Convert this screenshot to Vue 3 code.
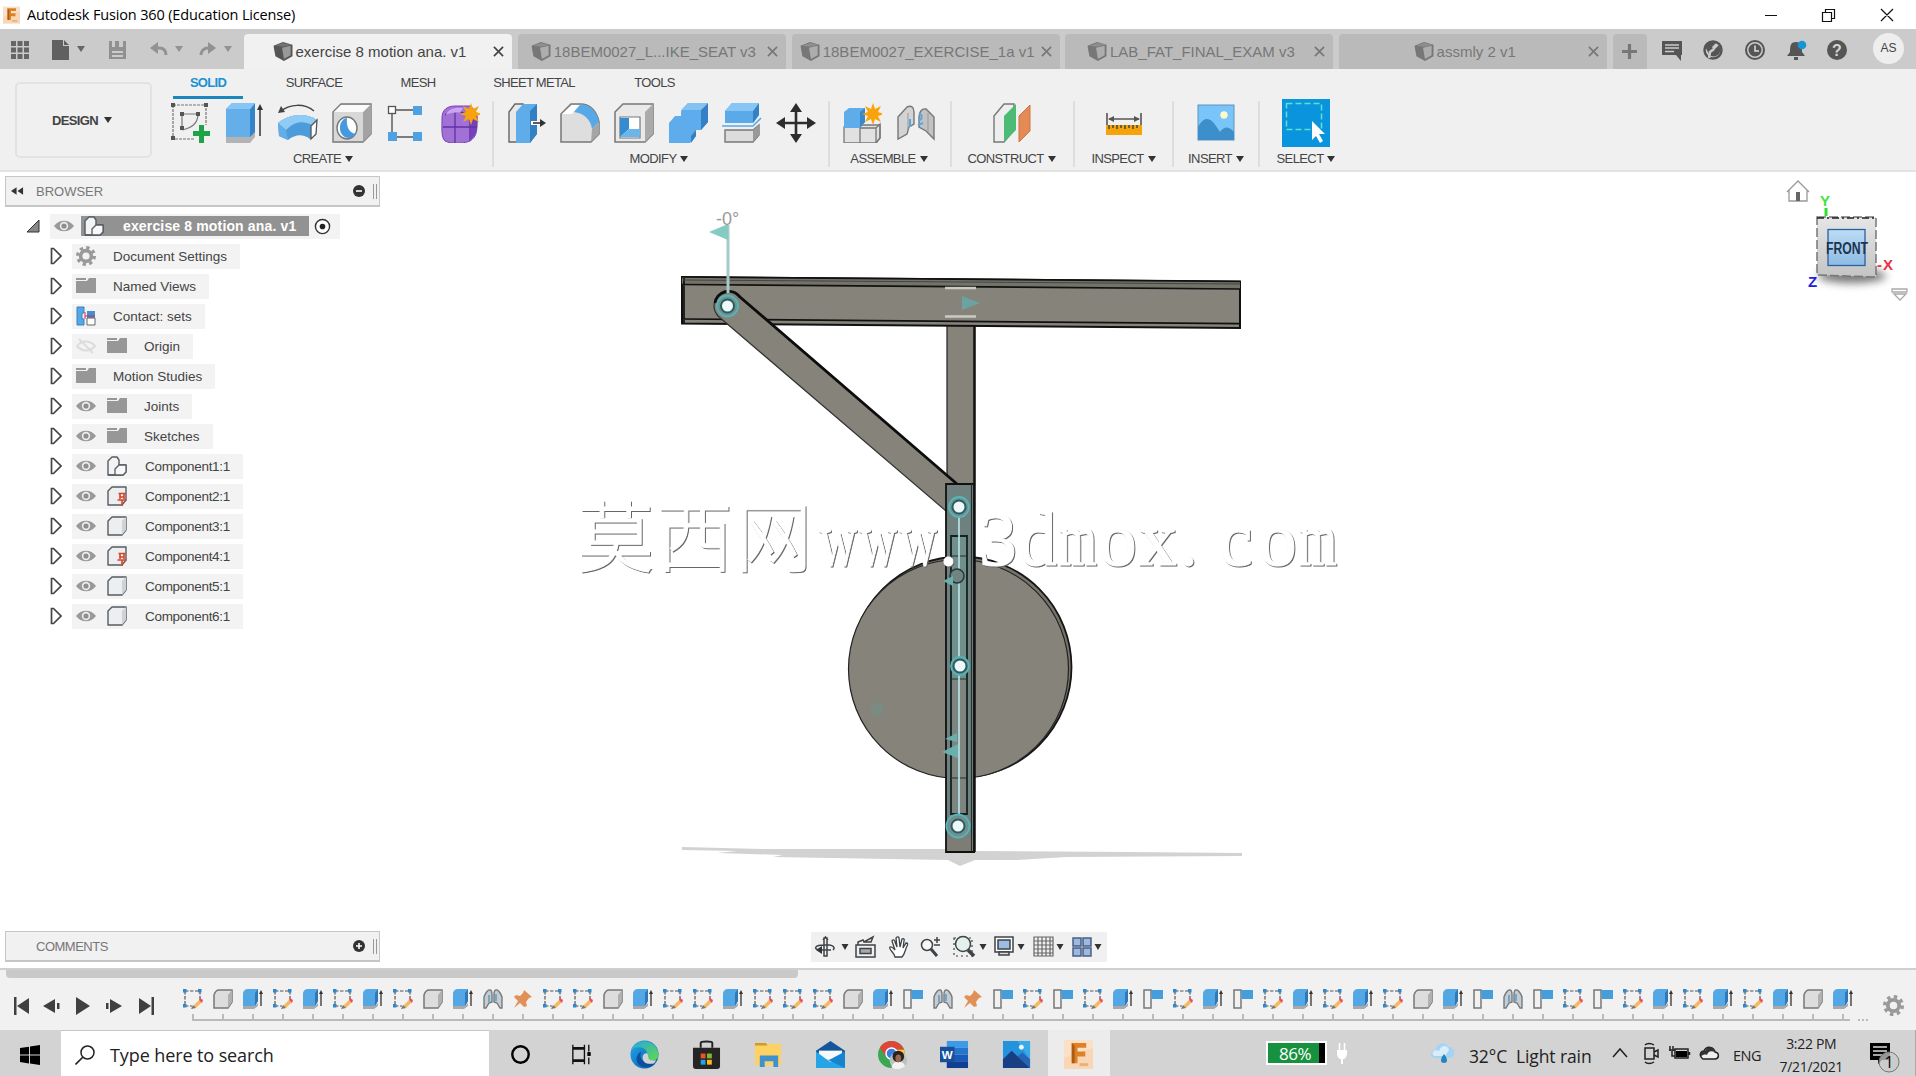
<template>
    <div class="window">
        <svg class="sprite" width="0" height="0">
            <linearGradient id="cubeFace" x1="0" y1="0" x2="0" y2="1">
                <stop offset="0" stop-color="#e6e6e6" />
                <stop offset="1" stop-color="#c4c4c4" />
            </linearGradient>
            <linearGradient id="frontFace" x1="0" y1="0" x2="0" y2="1">
                <stop offset="0" stop-color="#bcdcf4" />
                <stop offset="1" stop-color="#8dbbe4" />
            </linearGradient>
            <linearGradient id="edgeBlue" x1="0" y1="0" x2="1" y2="1">
                <stop offset="0" stop-color="#1fa9e6" />
                <stop offset="1" stop-color="#0b55b0" />
            </linearGradient>
            <linearGradient id="edgeGreen" x1="0" y1="0" x2="1" y2="1">
                <stop offset="0" stop-color="#25a8dd" />
                <stop offset="1" stop-color="#63d84c" />
            </linearGradient>

            <!-- ribbon -->
            <symbol id="r-sketch" viewBox="0 0 40 40">
                <path d="M3 2H36V22M3 2V36H24" fill="none" stroke="#777" stroke-width="1.2" stroke-dasharray="3 1" />
                <path d="M12 11V27M12 11H28C28 20 22 25 12 27" fill="none" stroke="#777" stroke-width="1.2" />
                <path d="M1 0h4v4H1zM34 0h4v4h-4zM1 33h4v4H1zM10 9h4v4h-4zM26 9h4v4h-4zM10 23h4v4h-4z" fill="#555" />
                <path d="M29 22h5v6h6v5h-6v7h-5v-7h-6v-5h6z" fill="#1ea446" />
            </symbol>
            <symbol id="r-extrude" viewBox="0 0 40 40">
                <path d="M2 34l6-6h23v6l-5 6H2z" fill="#b3b3b3" />
                <path d="M2 6l6-6h23l-5 6v28H2z" fill="#64afe9" />
                <path d="M26 6l5-6v29l-5 5z" fill="#3584c8" />
                <path d="M2 6l6-6h23l-5 6z" fill="#86c5f4" />
                <path d="M36 33V4" stroke="#333" stroke-width="1.5" />
                <path d="M33 7l3-6 3 6z" fill="#333" />
            </symbol>
            <symbol id="r-revolve" viewBox="0 0 40 40">
                <path d="M0 20C12 10 29 10 39 17l-1 15-6 4C25 31 18 31 10 37L1 33z" fill="#4c9cdc" />
                <path d="M0 20C12 10 29 10 39 17l-5 5C24 17 16 19 8 27z" fill="#8fcbf5" />
                <path d="M0 20l8 7 2 10-9-4z" fill="#63aee8" />
                <path d="M33 23l6-6-1 14-5 5z" fill="#fff" stroke="#555" stroke-width="1.3" />
                <path d="M3 8C12 1 26 0 36 8" fill="none" stroke="#444" stroke-width="1.5" />
                <path d="M0 10l3-7 4 6z" fill="#444" />
            </symbol>
            <symbol id="r-hole" viewBox="0 0 40 40">
                <path d="M1 9l8-8h30v30l-8 8H1z" fill="#d8d8d8" stroke="#777" stroke-width="1.4" />
                <path d="M31 9l8-8v30l-8 8z" fill="#a3a3a3" />
                <path d="M2 9l7-7h29l-7 7z" fill="#fafafa" />
                <ellipse cx="15" cy="25" rx="10" ry="11" fill="#fff" stroke="#777" stroke-width="1.4" />
                <path d="M15 15c-1 10 3 15 9 16-8 9-17 1-16-7 0-5 4-9 7-9z" fill="#4799df" />
            </symbol>
            <symbol id="r-pattern" viewBox="0 0 40 40">
                <path d="M10 7H27M6 11V29M11 34H27" fill="none" stroke="#555" stroke-width="1.4" />
                <rect x="2.5" y="3.5" width="7" height="7" fill="#fff" stroke="#555" stroke-width="1.3" />
                <path d="M27 3h9v9h-9zM2 29h9v9H2zM27 29h9v9h-9z" fill="#4ea1e2" />
            </symbol>
            <symbol id="r-form" viewBox="0 0 40 40">
                <path d="M2 15C2 7 7 3 15 3h15c6 4 8 9 7 18 0 8-1 13-7 17-8 3-19 3-25 0-4-4-3-12-3-23z" fill="#a171d6" stroke="#7943b7" />
                <path d="M29 14l8-4c1 12 1 22-8 28z" fill="#7640ba" />
                <path d="M5 12c7-5 17-4 23 0M3 24h34M15 9v31" fill="none" stroke="#6230a6" stroke-width="1.3" />
                <path d="M6 12c2-6 9-8 17-7l-3 5c-5-1-10 0-14 2z" fill="#c9a5f2" />
                <path d="M31 0l2 6 6-3-3 6 6 2-6 2 3 6-6-3-2 6-2-6-6 3 3-6-6-2 6-2-3-6 6 3z" fill="#f8a20c" />
            </symbol>
            <symbol id="r-press" viewBox="0 0 40 40">
                <path d="M3 9l6-8h8v30l-6 8H3z" fill="#e8e8e8" stroke="#666" stroke-width="1.4" />
                <path d="M10 9l7-8h14v30l-7 9H10z" fill="#5eace9" />
                <path d="M24 8l7-7v30l-7 9z" fill="#347fc2" />
                <path d="M25 20h9" stroke="#fff" stroke-width="4" />
                <path d="M27 20h10" stroke="#333" stroke-width="1.6" />
                <path d="M34 16l6 4-6 4z" fill="#333" />
            </symbol>
            <symbol id="r-fillet" viewBox="0 0 40 40">
                <path d="M1 11L11 1h9c11 0 17 8 19 18v12l-8 8H1z" fill="#dedede" stroke="#777" stroke-width="1.5" />
                <path d="M2 11l10-9h7l-7 9z" fill="#fff" />
                <path d="M14 9l7-8c10 1 16 8 18 18l-7 7C31 17 24 10 14 9z" fill="#56a8e7" />
                <path d="M32 26l7-7v12l-8 8z" fill="#a5a5a5" />
            </symbol>
            <symbol id="r-shell" viewBox="0 0 40 40">
                <path d="M1 9l8-8h30v30l-8 8H1z" fill="#e9e9e9" stroke="#777" stroke-width="1.5" />
                <path d="M31 9l8-8v30l-8 8z" fill="#aaa" />
                <path d="M6 14h20v21H6z" fill="#fff" stroke="#777" stroke-width="1.2" />
                <path d="M6 15h9v11l-9 8z" fill="#348bd0" />
                <path d="M6 34l9-8h11v8z" fill="#6cb5eb" />
            </symbol>
            <symbol id="r-combine" viewBox="0 0 40 40">
                <path d="M1 20l6-7h6V8l7-8h20v19l-7 8h-5v6l-6 7H1z" fill="#5eaceb" />
                <path d="M33 7l7-7v19l-7 8zM23 33l5-6v6l-5 7z" fill="#357fc4" />
                <path d="M13 7l7-7h20l-7 7z" fill="#83c2f1" />
            </symbol>
            <symbol id="r-split" viewBox="0 0 40 40">
                <path d="M3 8l7-8h27v12l-6 8H3z" fill="#5aa9e8" />
                <path d="M31 8l6-8v12l-6 8z" fill="#3480c4" />
                <path d="M3 8l7-8h27l-6 8z" fill="#86c5f4" />
                <path d="M3 27h28l6-5v10l-6 7H3z" fill="#dcdcdc" stroke="#777" stroke-width="1.4" />
                <path d="M31 27l6-5v10l-6 7z" fill="#999" />
                <path d="M0 23h31l8-8" fill="none" stroke="#5aa9e8" stroke-width="1.7" />
            </symbol>
            <symbol id="r-move" viewBox="0 0 40 40">
                <path d="M20 5v30M5 20h30" stroke="#2d2d2d" stroke-width="2.6" />
                <path d="M20 0l6 9H14zM20 40l-6-9h12zM0 20l9-6v12zM40 20l-9 6V14z" fill="#2d2d2d" />
            </symbol>
            <symbol id="r-newcomp" viewBox="0 0 40 40">
                <path d="M2 24h16V22h20v13l-4 5H2z" fill="#e1e1e1" stroke="#777" stroke-width="1.3" />
                <path d="M2 9l5-4h16v14l-5 6H2z" fill="#5eadea" />
                <path d="M18 9l5-4v14l-5 6z" fill="#3a88cb" />
                <path d="M18 25v15M18 25h16v15M34 25l4-4v14l-4 5" fill="none" stroke="#777" stroke-width="1.3" />
                <path d="M31 0l2 6 6-3-3 6 6 2-6 2 3 6-6-3-2 6-2-6-6 3 3-6-6-2 6-2-3-6 6 3z" fill="#f8a20c" />
            </symbol>
            <symbol id="r-joint" viewBox="0 0 40 40">
                <path d="M2 14l9-10c4-2 7 0 7 5v12l-5 3-2 7-9 5z" fill="#d3d3d3" stroke="#777" stroke-width="1.4" />
                <path d="M38 14l-8-8c-4-1-7 3-7 8v10l7 4 8 8z" fill="#c2c2c2" stroke="#777" stroke-width="1.4" />
                <path d="M12 10v17M32 10v19" stroke="#999" />
                <path d="M14 16v8M23 11c4 0 3 6 0 6M22 22l5-2" fill="none" stroke="#55a8e4" stroke-width="2" />
            </symbol>
            <symbol id="r-plane" viewBox="0 0 40 40">
                <path d="M2 13L12 1h10v26L12 39H2z" fill="#eee" stroke="#777" stroke-width="1.4" />
                <path d="M12 13L24 1v26L12 39z" fill="#4dbb75" />
                <path d="M27 13L38 2v26L27 39z" fill="#e58a55" stroke="#c77643" />
            </symbol>
            <symbol id="r-measure" viewBox="0 0 40 40">
                <path d="M3 10v12M37 10v12M5 16h30" stroke="#555" stroke-width="1.6" />
                <path d="M4 16l6-3v6zM36 16l-6-3v6z" fill="#555" />
                <rect x="2" y="22" width="36" height="10" fill="#f4a30a" />
                <path d="M5 22v4M9 22v3M13 22v4M17 22v3M21 22v4M25 22v3M29 22v4M33 22v3" stroke="#3f3f3f" stroke-width="1.4" />
            </symbol>
            <symbol id="r-insert" viewBox="0 0 40 40">
                <rect x="2" y="2" width="36" height="35" fill="#79c5fa" stroke="#5b94bd" />
                <circle cx="28" cy="12" r="3.7" fill="#fffbc8" />
                <path d="M2 24C8 13 14 14 20 23l4 6c4-6 9-6 14 0v8H2z" fill="#3c8fca" />
            </symbol>
            <symbol id="r-select" viewBox="0 0 48 48">
                <rect width="48" height="48" fill="#0a94dd" />
                <rect x="4.5" y="4.5" width="35" height="26" fill="none" stroke="#5de0d0" stroke-width="1.5" stroke-dasharray="6 3" />
                <path d="M30 22l13 13h-6l4 7-3 2-4-7-4 4z" fill="#fff" />
            </symbol>

            <!-- small feature icons -->
            <symbol id="t-sketch" viewBox="0 0 20 20">
                <path d="M2 2h15v9M2 2v15h7" fill="none" stroke="#555" stroke-width="1.2" stroke-dasharray="3.5 1.5" />
                <path d="M0 0h3.5v3.5H0zM15 0h3.5v3.5H15zM0 15h3.5v3.5H0z" fill="#3088cc" />
                <path d="M10 17l6-6 3 2-6 6z" fill="#f5b95c" />
                <path d="M16 11l1-2 3 2-1 3z" fill="#ef4d63" />
                <path d="M8 20l2-4 3 3z" fill="#777" />
            </symbol>
            <symbol id="t-box" viewBox="0 0 20 20">
                <path d="M1 6c1-3 2-5 5-5h13v12l-4 6H1z" fill="#ddd" stroke="#777" stroke-width="1.5" />
                <path d="M15 6l4-5v12l-4 6z" fill="#b0b0b0" />
            </symbol>
            <symbol id="t-extrude" viewBox="0 0 20 20">
                <path d="M0 17h12l3-3v3l-4 3H0z" fill="#aaa" />
                <path d="M0 4c1-3 2-4 5-4h10v12l-3 5H0z" fill="#54a7e5" />
                <path d="M12 4l3-4v12l-3 5z" fill="#3178b7" />
                <path d="M18 17V3" stroke="#333" stroke-width="1.3" />
                <path d="M16 5l2-4 2 4z" fill="#333" />
            </symbol>
            <symbol id="t-joint" viewBox="0 0 20 20">
                <path d="M1 8c1-3 4-8 6-7 2 0 2 3 2 5v7l-3 1-3 5H1zM19 8c-1-3-4-8-6-7-2 0-2 3-2 5v7l3 1 3 5h2z" fill="#c8ccd0" stroke="#747a7f" stroke-width="1.4" />
                <path d="M6 6v7M13 5v7" stroke="#4f9ecb" stroke-width="1.5" />
            </symbol>
            <symbol id="t-pin" viewBox="0 0 20 20">
                <path d="M11 1l8 7-3 1-3 4 1 4-3 1-4-4-6 5 4-7-4-4 2-2 4 1 3-3z" fill="#e19157" />
            </symbol>
            <symbol id="t-flag" viewBox="0 0 20 20">
                <path d="M1 1h7v18H1z" fill="#f1f1f1" stroke="#777" stroke-width="1.5" />
                <path d="M8 1h12v9H9z" fill="#459ddc" />
            </symbol>

            <!-- browser tree -->
            <symbol id="b-eye" viewBox="0 0 20 20">
                <path d="M0 10C5 3 15 3 20 10 15 17 5 17 0 10z" fill="#999" />
                <circle cx="10" cy="10" r="4.2" fill="#eee" />
                <circle cx="10" cy="10" r="2.6" fill="#8e8e8e" />
            </symbol>
            <symbol id="b-eyeoff" viewBox="0 0 20 20">
                <path d="M1 10C6 4 14 4 19 10 14 16 6 16 1 10zM3 3l14 14" fill="none" stroke="#dcdcdc" stroke-width="2" />
            </symbol>
            <symbol id="b-gear" viewBox="0 0 20 20">
                <circle cx="10" cy="10" r="5.4" fill="none" stroke="#999" stroke-width="3.6" />
                <circle cx="10" cy="10" r="8.4" fill="none" stroke="#999" stroke-width="3.2" stroke-dasharray="3.3 3.3" />
            </symbol>
            <symbol id="b-folder" viewBox="0 0 20 20">
                <path d="M0 5h11l2-3h7v15H0zM0 2h10v2H0z" fill="#979797" />
            </symbol>
            <symbol id="b-contact" viewBox="0 0 20 20">
                <path d="M1 1h7v6H6v6h2v6H1z" fill="#55a7e5" stroke="#3b83bb" />
                <path d="M11 5h8v7h-8z" fill="#448fce" />
                <path d="M11 12h8v7h-8z" fill="#fff" stroke="#666" />
                <path d="M9 6v7M9 10h10" stroke="#d22c54" />
            </symbol>
            <symbol id="b-asm" viewBox="0 0 20 20">
                <path d="M1 5l4-4h5l2 3v5h7v7l-3 3H1z" fill="#f2f3f4" stroke="#555c63" stroke-width="1.4" stroke-linejoin="round" />
                <path d="M8 19v-6l4-4h7v7l-3 3zM1 19h7" fill="#f8f8f8" stroke="#555c63" stroke-width="1.3" stroke-linejoin="round" />
            </symbol>
            <symbol id="b-comp" viewBox="0 0 20 20">
                <path d="M1 5l4-4h14v13l-4 5H1z" fill="#eceef0" stroke="#555c63" stroke-width="1.4" stroke-linejoin="round" />
                <path d="M15 5l4-4v13l-4 5z" fill="#cfd2d5" />
            </symbol>
            <symbol id="b-pinned" viewBox="0 0 20 20">
                <path d="M1 5l4-4h14v13l-4 5H1z" fill="#eceef0" stroke="#555c63" stroke-width="1.4" stroke-linejoin="round" />
                <path d="M11.500 7.500h7M13 8v5M17 8v5M13 11h4M10.500 14h9M15 14v6" stroke="#d54424" stroke-width="1.6" />
            </symbol>

            <symbol id="cube" viewBox="0 0 20 20">
                <path d="M0 4L10 0l10 3v12l-9 5L2 15z" fill="currentColor" />
                <path d="M9 6l9-2v10l-7 4z" fill="#fff" opacity=".4" />
                <path d="M2 4l8-3 9 2-9 2z" fill="#fff" opacity=".18" />
            </symbol>
            <symbol id="fusion" viewBox="0 0 30 30">
                <rect width="30" height="30" fill="#fbe0c8" />
                <path d="M0 18l30-10v22H0z" fill="#f9cfa9" opacity=".6" />
                <path d="M8 3h15v5h-9v4h8v5h-8v7H8z" fill="#dd8129" />
                <path d="M8 3l3 3v18H8z" fill="#ad5a12" />
                <path d="M16 24h9v3h-9z" fill="#e9b078" />
            </symbol>
        </svg>

        <header class="titlebar">
            <svg class="app-logo"><use href="#fusion" /></svg>
            <span class="app-title">Autodesk Fusion 360 (Education License)</span>
            <svg class="win-buttons" viewBox="0 0 140 20">
                <path d="M6 10.5h12M63.5 7.5h9v9h-9zM66.5 7V4.5h9v9H73M122 4l12 12M134 4l-12 12" fill="none" stroke="#111" stroke-width="1.2" />
            </svg>
        </header>

        <div class="tabstrip">
            <svg class="quick" viewBox="0 0 244 39">
                <path d="M11 11h5v5h-5zM17.5 11h5v5h-5zM24 11h5v5h-5zM11 17.5h5v5h-5zM17.5 17.5h5v5h-5zM24 17.5h5v5h-5zM11 24h5v5h-5zM17.5 24h5v5h-5zM24 24h5v5h-5z" fill="#666" />
                <path d="M52 10h11v6h6v14H52zM64 10l5 5h-5z" fill="#606060" />
                <path d="M77 16h8l-4 6z" fill="#666" />
                <path d="M109 11h17v18h-17z" fill="#909090" />
                <path d="M112 11h3v6h-3zM119 11h4v6h-4zM112 21h11v2h-11zM112 25h11v2h-11z" fill="#cbcbcb" />
                <path d="M153 18h6c5 0 7 3 7 7" fill="none" stroke="#929292" stroke-width="3" />
                <path d="M150 18l8-6v12z" fill="#929292" />
                <path d="M175 16h8l-4 6zM224 16h8l-4 6z" fill="#929292" />
                <path d="M212 18h-4c-5 0-7 4-7 7" fill="none" stroke="#929292" stroke-width="3" />
                <path d="M216 18l-8-6v12z" fill="#929292" />
            </svg>
            <div v-for="tab in tabs" :key="tab.name" class="doc-tab" :class="{ active: tab.active }">
                <div class="doc-name">
                    <svg class="cube"><use href="#cube" /></svg>
                    <span>{{ tab.name }}</span>
                </div>
                <svg class="close" viewBox="0 0 12 12"><path d="M1 1l10 10M11 1L1 11" stroke="currentColor" stroke-width="1.8" /></svg>
            </div>
            <div class="new-tab">
                <svg viewBox="0 0 16 16"><path d="M8 1v14M1 8h14" stroke="#777" stroke-width="3" /></svg>
            </div>
            <svg class="status" viewBox="0 0 200 39">
                <path d="M6 11h20v14h-1v6l-5-6H6z" fill="#555" />
                <path d="M9 15h14M9 18h14M9 21.5h9" stroke="#ccc" stroke-width="1.4" />
                <circle cx="57" cy="20" r="8.5" fill="#cbcbcb" stroke="#555" stroke-width="2.5" />
                <path d="M49 17c1-5 7-7 12-5l-5 5 2 3 5-5c4 8-2 13-8 11-2 0-3-5-6-9z" fill="#555" />
                <path d="M53 28l1-6 4-3" fill="none" stroke="#cbcbcb" stroke-width="2.5" />
                <circle cx="99" cy="20" r="9" fill="#cbcbcb" stroke="#555" stroke-width="2" />
                <circle cx="99" cy="20" r="6.5" fill="#555" />
                <path d="M99 15.5V21h4" fill="none" stroke="#ddd" stroke-width="1.5" />
                <path d="M131 26l3-4c0-7 1-10 6-10s6 3 6 10l3 4zM138 27h4v3h-4z" fill="#555" />
                <circle cx="146" cy="15" r="4.3" fill="#1695d4" />
                <circle cx="181" cy="20" r="10" fill="#555" />
                <text x="181" y="26" text-anchor="middle" class="help">?</text>
            </svg>
            <div class="avatar">AS</div>
        </div>

        <div class="ribbon">
            <div class="workspace"><span>DESIGN</span><i class="caret"></i></div>
            <div class="ribbon-main">
                <nav class="ribbon-tabs">
                    <span v-for="(t, i) in ribbonTabs" :key="t.name" :class="{ current: i === 0 }"
                        :style="{ width: t.width + 'px' }"><b>{{ t.name }}</b></span>
                </nav>
                <div class="groups">
                    <section v-for="g in groups" :key="g.name" class="group" :class="g.name.toLowerCase()"
                        :style="{ width: g.width + 'px' }">
                        <div class="tools">
                            <svg v-for="icon in g.icons" :key="icon" :class="['tool', icon]"><use :href="'#r-' + icon" /></svg>
                        </div>
                        <div class="group-name"><span>{{ g.name }}</span><i class="caret"></i></div>
                    </section>
                </div>
            </div>
        </div>

        <main class="canvas">
            <svg class="scene" viewBox="0 172 1916 797">
                <!-- ground shadow -->
                <path d="M682 847l85 2h180l30 2 150 1 115 1 0 3-175 1-50 3h-42l-15 6-12-6-175-3 10-2-66-2 20-2-55-1z" fill="#d2d2d2" />
                <!-- wheel -->
                <circle cx="961" cy="667" r="110.5" fill="#77756b" stroke="#151515" stroke-width="1.8" />
                <ellipse cx="958.5" cy="669" rx="110" ry="109.5" fill="#86837a" stroke="#222" stroke-width="1.2" />
                <!-- beam and post -->
                <path d="M947 320h27.5v165H947z" fill="#86837a" stroke="#222" stroke-width="1.2" />
                <path d="M974.5 326v526" stroke="#111" stroke-width="2.5" />
                <path d="M682 277l558 4.5V328l-558-4.5z" fill="#86837a" stroke="#111" stroke-width="2" />
                <path d="M682 277l558 4.5v7.5l-558-5z" fill="#74736a" />
                <path d="M682 277l558 4.5M682 284.5l558 4.5M682 319l558 4.7M684 277v46" stroke="#111" stroke-width="1.7" />
                <path d="M683 280l557 4" stroke="#444" stroke-width="1" />
                <path d="M945 288h31M945 316.5h31" stroke="#cacac4" stroke-width="2.5" />
                <path d="M962 296l18 7-18 7z" fill="#6aa39f" />
                <!-- arm -->
                <path d="M718 316C711 308 714 297 722 292c6-3 12-1 18 5l217 187-11 27z" fill="#86837a" stroke="#333" stroke-width="1.2" />
                <path d="M715 303c1-10 16-17 25-6l217 187" fill="none" stroke="#0d0d0d" stroke-width="2.8" />
                <!-- slotted bar -->
                <path d="M946 484h28v368h-28z" fill="#6f817e" stroke="#111" stroke-width="1.8" />
                <path d="M947 837h26v14h-26z" fill="#7d7d76" />
                <path d="M946 852h29" stroke="#111" stroke-width="1.5" />
                <path d="M951 536h16v278h-16z" fill="#71908c" stroke="#14211f" stroke-width="1.8" />
                <path d="M952 680h14v133h-14z" fill="#7e8580" />
                <path d="M971.5 484v367M951 556h16M951 679h16M951 778h16" stroke="#223230" stroke-width="1.1" fill="none" />
                <path d="M959 515v300" stroke="#b5dcde" stroke-width="1.8" />
                <circle cx="957" cy="576" r="7" fill="#708480" stroke="#263936" stroke-width="1.5" />
                <path d="M943 581l10-5v10zM942 752l16-8v14zM945 739l12-6v9z" fill="#6aafab" />
                <circle cx="877" cy="709" r="7" fill="#748f86" opacity=".7" />
                <g v-for="j in joints" :key="j.y">
                    <circle :cx="j.x" :cy="j.y" :r="j.r" fill="#6f908f" stroke="#57b4b8" stroke-width="1.8" />
                    <circle :cx="j.x" :cy="j.y" r="6.5" fill="#eef8f8" stroke="#2b5c60" stroke-width="2" />
                </g>
                <!-- limit flag -->
                <path d="M728 225v68" stroke="#a4cbc4" stroke-width="3" />
                <path d="M709 232l19-8v16z" fill="#85cbc2" />
                <text x="716" y="225" class="angle">-0°</text>

                <g class="watermark">
                    <text x="577" y="566" class="han" textLength="235">莫西网</text>
                    <text v-for="c in url" :key="c.x" :transform="`translate(${c.x} 565) scale(${c.scale} 1)`">{{ c.ch }}</text>
                </g>

                <!-- view cube -->
                <ellipse cx="1852" cy="276" rx="34" ry="7" class="cube-shadow" />
                <path d="M1817 217h59v60l-59-2z" fill="url(#cubeFace)" stroke="#777" stroke-width="1.5" stroke-dasharray="9 3" />
                <path d="M1817 218h59" stroke="#222" stroke-width="1.5" stroke-dasharray="7 3 2 3" />
                <rect x="1828" y="229.5" width="37" height="36" fill="url(#frontFace)" stroke="#2b5f9f" stroke-width="1.3" />
                <text x="1826" y="253.5" class="front" textLength="42" lengthAdjust="spacingAndGlyphs">FRONT</text>
                <path d="M1826 208v8" stroke="#2ee02e" stroke-width="3" />
                <text x="1820" y="206" class="axis y-axis">Y</text>
                <text x="1808" y="287" class="axis z-axis">Z</text>
                <text x="1877" y="270" class="axis x-axis" textLength="16">-X</text>
                <path d="M1787 192l11-11 11 11M1789 190v11h18v-11" fill="#fff" stroke="#999" stroke-width="1.3" />
                <path d="M1796 192h4v9h-4z" fill="#666" />
                <path d="M1892 289h15v3h-15zM1894 294l6 6 6-6z" fill="#fff" stroke="#aaa" stroke-width="1.3" />
            </svg>

            <aside class="browser">
                <div class="panel-bar">
                    <svg class="rewind" viewBox="0 0 14 8"><path d="M0 4l6-4v8zM7 4l6-4v8z" fill="#333" /></svg>
                    <span>BROWSER</span>
                    <svg class="bullet" viewBox="0 0 12 12"><circle cx="6" cy="6" r="6" fill="#333" /><path d="M3 6h6" stroke="#fff" stroke-width="1.6" /></svg>
                    <i class="grip"></i>
                </div>
                <div class="root">
                    <svg class="opened" viewBox="0 0 14 14"><path d="M1 13L13 1v12z" fill="#888" stroke="#333" /></svg>
                    <div class="root-row">
                        <svg class="ic"><use href="#b-eye" /></svg>
                        <div class="root-name"><svg class="ic"><use href="#b-asm" /></svg><b>exercise 8 motion ana. v1</b></div>
                        <svg class="radio" viewBox="0 0 18 18"><circle cx="9" cy="9" r="7.5" fill="#fff" stroke="#333" stroke-width="1.5" /><circle cx="9" cy="9" r="3" fill="#222" /></svg>
                    </div>
                </div>
                <div v-for="n in nodes" :key="n.name" class="node">
                    <svg class="arrow" viewBox="0 0 12 18"><path d="M1.5 1.5h2L11 9l-7.5 7.5h-2z" fill="#fff" stroke="#444" stroke-width="1.7" /></svg>
                    <div class="node-row">
                        <svg v-if="n.eye" class="ic"><use :href="'#b-' + n.eye" /></svg>
                        <svg class="ic"><use :href="'#b-' + n.icon" /></svg>
                        <span :class="{ part: n.name.includes('Component') }">{{ n.name }}</span>
                    </div>
                </div>
            </aside>

            <div class="canvas-foot">
                <div class="panel-bar comments">
                    <span>COMMENTS</span>
                    <svg class="bullet" viewBox="0 0 12 12"><circle cx="6" cy="6" r="6" fill="#333" /><path d="M3 6h6M6 3v6" stroke="#fff" stroke-width="1.6" /></svg>
                    <i class="grip"></i>
                </div>
                <svg class="navbar" viewBox="0 0 296 30">
                    <g fill="none" stroke="#3e4347" stroke-width="1.5">
                        <path d="M13 6h3v18h-3zM12 8l2.5-3L17 8M22 18c4-4-4-6-9-5-9 0-11 4-5 5h12" />
                        <path d="M45 13h19v12H45zM47 13v-3l5-2 1 2 9-5-2 5h-7" />
                        <path d="M49 16.5h11v5H49z" fill="#aaa" />
                        <path d="M84 25c-1-5-7-8-5-10 2-1 4 2 5 3l-3-9c1-2 3-1 3 1l2 5-1-9c1-2 3-1 3 0l1 9 2-8c1-1 3 0 2 2l-1 7 3-5c2 0 2 1 1 3-2 4-2 8-5 11z" fill="#fff" stroke-width="1.3" />
                        <circle cx="116" cy="13" r="5.5" fill="#f5f8f6" /><path d="M126 5v6M123 8h6M123 13h6" />
                        <path d="M120 17l6 7" stroke-width="3" />
                        <path d="M143 6h18v18h-18z" stroke-dasharray="2 3" stroke-width="1.2" />
                        <circle cx="152" cy="12" r="7.5" fill="#e3f0eb" /><path d="M157 18l6 6" stroke-width="3.5" />
                        <path d="M184 5h18v15h-18z" fill="#fff" /><path d="M187 8h12v9h-12z" fill="#9dbce3" /><path d="M188 23h10v-3h-10z" fill="#ddd" />
                        <path d="M223 5h19v19h-19zM227 5v19M231 5v19M235 5v19M239 5v19M223 9h19M223 13h19M223 17h19M223 21h19" stroke="#666" stroke-width="1.2" />
                        <path d="M262 6h8v8h-8zM272 6h8v8h-8zM262 16h8v8h-8zM272 16h8v8h-8z" fill="#9cb9e2" stroke="#4a5e83" />
                    </g>
                    <path d="M5 18l6-4v8zM30.5 12h7l-3.5 6zM168.5 12h7l-3.5 6zM206.5 12h7l-3.5 6zM245.5 12h7l-3.5 6zM283.5 12h7l-3.5 6z" fill="#333" />
                </svg>
            </div>
        </main>

        <div class="timeline">
            <div class="scroll"></div>
            <div class="track">
                <svg class="playback" viewBox="0 0 166 24">
                    <path d="M14 3h2.5v18H14zM29 4v16l-12-8zM55 5v14l-12-7zM57 9h2.5v6H57zM76 3l14 9-14 9zM106 9h2.5v6H106zM110 5l12 7-12 7zM139 4v16l12-8zM151.5 3h2.5v18h-2.5z" fill="#404040" />
                </svg>
                <div class="features">
                    <div v-for="(f, i) in features" :key="i" class="feature">
                        <svg><use :href="'#t-' + kinds[f]" /></svg>
                        <i></i>
                    </div>
                </div>
                <div class="more"></div>
                <svg class="cog"><use href="#b-gear" /></svg>
            </div>
        </div>

        <footer class="taskbar">
            <div class="start"><svg viewBox="0 0 20 20"><path d="M0 3l9-1.3v7.8H0zM10 1.5L20 0v9.5H10zM0 10.5h9v8L0 17zM10 10.5h10V20l-10-1.5z" fill="#000" /></svg></div>
            <div class="search">
                <svg viewBox="0 0 20 20"><circle cx="12.5" cy="7.5" r="6.5" fill="none" stroke="#222" stroke-width="1.5" /><path d="M8 12l-7.5 7.5" stroke="#222" stroke-width="1.6" /></svg>
                <span>Type here to search</span>
            </div>
            <div class="task"><svg viewBox="0 0 30 30"><circle cx="15" cy="15" r="8.5" fill="none" stroke="#000" stroke-width="2.5" /></svg></div>
            <div class="task"><svg viewBox="0 0 30 30"><path d="M5 9.5h12v11H5zM5 5v3h12V5M5 25v-3h12v3M21.5 5v7M21.5 18v7" fill="none" stroke="#111" stroke-width="1.4" /><path d="M20 12.5h3.5v4H20z" /></svg></div>
            <div class="task"><svg viewBox="0 0 30 30">
                <circle cx="15" cy="15" r="14.5" fill="url(#edgeBlue)" />
                <path d="M1 11C5-2 25-2 29 12c2 8-4 11-10 9-5-1 0-4-1-7C16 6 5 6 1 11z" fill="url(#edgeGreen)" />
                <path d="M12 12c-4 7 2 14 14 12-5 6-16 6-19-2-1-5 2-9 5-10z" fill="#0c4f9f" />
                <path d="M18 14c2 5-1 8 9 7l-2 3c-7 2-12-1-12-6 0-3 3-5 5-4z" fill="#d3d3d3" />
            </svg></div>
            <div class="task"><svg viewBox="0 0 30 30">
                <path d="M9 8V3c0-2 12-2 12 0v5" fill="none" stroke="#222" stroke-width="2" /><path d="M1 8h28v19c0 2-1 3-3 3H4c-2 0-3-1-3-3z" fill="#252525" />
                <path d="M9 14h5v5H9z" fill="#ef5027" /><path d="M15.5 14h5v5h-5z" fill="#82bb29" /><path d="M9 20.5h5v5H9z" fill="#22a5e8" /><path d="M15.5 20.5h5v5h-5z" fill="#fabc16" />
            </svg></div>
            <div class="task"><svg viewBox="0 0 30 30"><path d="M1 3h11l3 3H1z" fill="#d79c17" /><path d="M1 6h12l2-2h13v22H1z" fill="#fdd164" /><path d="M6 28V16h19v12h-5v-6h-9v6z" fill="#3d91cf" /></svg></div>
            <div class="task"><svg viewBox="0 0 30 30"><path d="M0 11L15 1l15 10v6H0z" fill="#15559b" /><path d="M3 11h24v9H3z" fill="#f5fafd" /><path d="M0 12l15 11 15-11v17H0z" fill="#26a5e6" /><path d="M13 21L30 12v17z" fill="#1684cd" /></svg></div>
            <div class="task"><svg viewBox="0 0 30 30">
                <circle cx="14" cy="15" r="14" fill="#3ba653" /><path d="M2 8C8-2 22-1 27 10H14l-5 8z" fill="#df4638" /><path d="M14 10h13c3 9-3 19-13 19l7-12z" fill="#f8cb3b" />
                <circle cx="14" cy="14" r="6.5" fill="#fff" /><circle cx="14" cy="14" r="5" fill="#377fe7" />
                <circle cx="21" cy="21" r="9" fill="#b8c4b8" /><path d="M14 28c1-7 12-8 14-1-4 4-11 4-14 1z" fill="#f3f3f3" /><circle cx="21" cy="17" r="6" fill="#28211f" /><ellipse cx="21" cy="19" rx="3" ry="4" fill="#986850" />
            </svg></div>
            <div class="task"><svg viewBox="0 0 30 30"><path d="M7 1h22v7H7z" fill="#3c9ae8" /><path d="M7 8h22v7H7z" fill="#2476cd" /><path d="M7 15h22v7H7z" fill="#185abc" /><path d="M7 22h22v7H7z" fill="#103f91" /><path d="M0 7h15v16H0z" fill="#174f9c" /><text x="7.5" y="19.5" text-anchor="middle" class="word">W</text></svg></div>
            <div class="task"><svg viewBox="0 0 30 30"><path d="M1 1h28v28H1z" fill="#2293dc" /><path d="M16 1h13v20z" fill="#39aae9" /><path d="M1 20l9-9 19 18H1z" fill="#183e83" /><path d="M16 17l5-4 8 7v9z" fill="#2863b5" /><circle cx="20" cy="7.5" r="2.5" fill="#ecf9ff" /></svg></div>
            <div class="task open"><svg><use href="#fusion" /></svg></div>

            <div class="battery">86%</div>
            <svg class="plug" viewBox="0 0 14 24"><path d="M4.5 2v7M9.5 2v7" stroke="#fff" stroke-width="1.6" /><path d="M2 9h10v3c0 4-2 6-4 6v5H6v-5c-2 0-4-2-4-6z" fill="#fff" /></svg>
            <svg class="weather-icon" viewBox="0 0 26 22"><path d="M5 16c-6-1-5-8 1-8C6 0 17-1 18 5c7-1 9 10 2 11z" fill="#a4d3f3" /><path d="M4 14c-4-4 1-7 5-5 2-7 9-6 10-1l-4 6z" fill="#d8edfa" /><path d="M14 12c4 5 4 9 0 9s-4-4 0-9z" fill="#2584bd" /></svg>
            <span class="weather">32°C&nbsp; Light rain</span>
            <svg class="tray" viewBox="0 0 120 24">
                <g fill="none" stroke="#222" stroke-width="1.5">
                    <path d="M4 16l7-8 7 8M36 7h9v11h-9zM45 11l4-2v7l-4-2M36 4c2-2 6-2 9 0M36 21c2 2 6 2 9 0" />
                    <path d="M66 8h13v9H66zM80.5 11v3M61 5v5M64 5v5M60 9h6M63 10v5h3" />
                    <path d="M94 18c-5-4-2-8 1-8 3-6 10-4 11 1 5 1 4 7 0 7z" fill="#eee" />
                </g>
                <path d="M67 10h11v6H67z" /><path d="M92 15c-1-4 2-6 4-5 3-6 9-4 10 1-5-2-7 0-8 3-2-1-4 0-6 1z" fill="#333" />
            </svg>
            <span class="lang">ENG</span>
            <div class="clock"><span>3:22 PM</span><span>7/21/2021</span></div>
            <svg class="notify" viewBox="0 0 36 34"><path d="M2 4h20v17h-8l-4 4v-4H2z" /><path d="M5 8h14M5 12h14M5 16h9" stroke="#ddd" stroke-width="1.6" /><circle cx="21" cy="23" r="10" fill="#c9c9c9" fill-opacity=".75" stroke="#777" /><text x="21" y="29" text-anchor="middle">1</text></svg>
        </footer>
    </div>
</template>

<script setup>
const tabs = [
    { name: 'exercise 8 motion ana. v1', active: true },
    { name: '18BEM0027_L...IKE_SEAT v3' },
    { name: '18BEM0027_EXERCISE_1a v1' },
    { name: 'LAB_FAT_FINAL_EXAM v3' },
    { name: 'assmly 2 v1' }
]

const ribbonTabs = [
    { name: 'SOLID', width: 70 },
    { name: 'SURFACE', width: 142 },
    { name: 'MESH', width: 66 },
    { name: 'SHEET METAL', width: 166 },
    { name: 'TOOLS', width: 75 }
]

const groups = [
    { name: 'CREATE', width: 330, icons: ['sketch', 'extrude', 'revolve', 'hole', 'pattern', 'form'] },
    { name: 'MODIFY', width: 336, icons: ['press', 'fillet', 'shell', 'combine', 'split', 'move'] },
    { name: 'ASSEMBLE', width: 122, icons: ['newcomp', 'joint'] },
    { name: 'CONSTRUCT', width: 123, icons: ['plane'] },
    { name: 'INSPECT', width: 99, icons: ['measure'] },
    { name: 'INSERT', width: 86, icons: ['insert'] },
    { name: 'SELECT', width: 92, icons: ['select'] }
]

const nodes = [
    { name: 'Document Settings', icon: 'gear' },
    { name: 'Named Views', icon: 'folder' },
    { name: 'Contact: sets', icon: 'contact' },
    { name: 'Origin', icon: 'folder', eye: 'eyeoff' },
    { name: 'Motion Studies', icon: 'folder' },
    { name: 'Joints', icon: 'folder', eye: 'eye' },
    { name: 'Sketches', icon: 'folder', eye: 'eye' },
    { name: 'Component1:1', icon: 'asm', eye: 'eye' },
    { name: 'Component2:1', icon: 'pinned', eye: 'eye' },
    { name: 'Component3:1', icon: 'comp', eye: 'eye' },
    { name: 'Component4:1', icon: 'pinned', eye: 'eye' },
    { name: 'Component5:1', icon: 'comp', eye: 'eye' },
    { name: 'Component6:1', icon: 'comp', eye: 'eye' }
]

const joints = [
    { x: 727.5, y: 306, r: 10.5 },
    { x: 959, y: 507, r: 10 },
    { x: 960, y: 666, r: 9 },
    { x: 958, y: 826, r: 11.5 }
]

// every letter sits in a 40px cell, wide ones are squeezed into it
const squeeze = { w: 0.68, m: 0.63 }
const url = [...'www.3dmox.com'].map((ch, i) => ({
    ch,
    x: 819 + i * 40,
    scale: squeeze[ch] || 0.98
}))

// one letter per feature in the history
const kinds = { s: 'sketch', b: 'box', e: 'extrude', j: 'joint', p: 'pin', f: 'flag' }
const features = [...'sbesesesbejpssbessesssbefjpfsfsefsefsesesbefjfsfsesesebe']
</script>

<style>
body {
    margin: 0;
    overflow: hidden;
}
</style>

<style scoped>
.window {
    width: 1916px;
    height: 1076px;
    display: flex;
    flex-direction: column;
    font-family: "Liberation Sans", Arial, sans-serif;
    font-size: 13px;
    color: #444;
    background: #fff;
    overflow: hidden;
}

.window * {
    box-sizing: border-box;
}

svg {
    flex: none;
    display: block;
}

.sprite {
    position: absolute;
}

.titlebar {
    height: 29px;
    flex: none;
    display: flex;
    align-items: center;
    padding-left: 3px;
}

.app-logo {
    width: 17px;
    height: 18px;
}

.app-title {
    margin-left: 7px;
    font-family: "Open Sans", "Noto Sans", sans-serif;
    font-size: 14.5px;
    letter-spacing: -0.15px;
    color: #000;
}

.win-buttons {
    width: 140px;
    height: 20px;
    margin: 0 17px 0 auto;
}

.tabstrip {
    height: 40px;
    flex: none;
    display: flex;
    align-items: flex-end;
    background: #cbcbcb;
}

.quick {
    width: 244px;
    height: 39px;
}

.doc-tab {
    width: 268px;
    height: 35px;
    margin-right: 5.8px;
    padding-right: 8px;
    display: flex;
    align-items: center;
    background: #bababa;
    color: #777;
    border-radius: 4px 4px 0 0;
    font-size: 15px;
}

.doc-tab.active {
    background: #f1f1f1;
    color: #444;
}

.doc-name {
    flex: 1;
    display: flex;
    align-items: center;
    justify-content: center;
    gap: 3px;
    padding-left: 2px;
    white-space: nowrap;
}

.cube {
    width: 20px;
    height: 19px;
    color: #777;
}

.active .cube {
    color: #555;
}

.close {
    width: 11px;
    height: 11px;
}

.new-tab {
    width: 34px;
    height: 35px;
    display: grid;
    place-items: center;
    background: #bababa;
    border-radius: 4px 4px 0 0;
}

.new-tab svg {
    width: 17px;
}

.status {
    width: 200px;
    height: 39px;
    margin-left: 9px;
}

.help {
    font: bold 16px "Liberation Sans", sans-serif;
    fill: #d6d6d6;
}

.avatar {
    width: 31px;
    height: 31px;
    margin: 0 12px 5px auto;
    border-radius: 50%;
    background: #eee;
    text-align: center;
    line-height: 31px;
    font-size: 12px;
}

.ribbon {
    height: 103px;
    flex: none;
    display: flex;
    background: #f0f0f0;
    border-bottom: 2px solid #e3e3e3;
}

.caret {
    border: 4px solid transparent;
    border-top: 6px solid #333;
    border-bottom: 0;
}

.workspace {
    width: 137px;
    height: 76px;
    margin: 13px 12px 0 15px;
    padding-right: 3px;
    display: flex;
    align-items: center;
    justify-content: center;
    gap: 6px;
    border: 2px solid #e2e2e2;
    border-radius: 5px;
    font-weight: bold;
    letter-spacing: -0.6px;
}

.ribbon-tabs {
    height: 30px;
    display: flex;
    padding-left: 9px;
}

.ribbon-tabs span {
    display: flex;
    justify-content: center;
    padding-top: 6px;
    white-space: nowrap;
}

.ribbon-tabs b {
    font-weight: normal;
    letter-spacing: -0.7px;
}

.ribbon-tabs .current {
    color: #1b91cf;
    border-bottom: 3px solid #1b87bd;
}

.ribbon-tabs .current b {
    font-weight: bold;
}

.groups {
    display: flex;
}

.group {
    height: 66px;
    margin-top: 2px;
    border-right: 2px solid #dedede;
}

.group.create {
    padding-right: 10px;
}

.group.modify {
    padding-right: 4px;
}

.group.assemble,
.group.construct {
    padding-right: 2px;
}

.group.select {
    border: 0;
}

.tools {
    height: 44px;
    display: flex;
    justify-content: center;
    align-items: center;
    gap: 14px;
}

.create .tools,
.modify .tools {
    padding-left: 4px;
}

.tool {
    width: 40px;
    height: 40px;
}

.tool.select {
    width: 48px;
    height: 48px;
}

.group-name {
    display: flex;
    justify-content: center;
    align-items: center;
    gap: 4px;
    margin-top: 6px;
    letter-spacing: -0.6px;
}

.canvas {
    flex: 1;
    position: relative;
    display: flex;
    flex-direction: column;
    justify-content: space-between;
}

.scene {
    position: absolute;
    inset: 0;
    width: 1916px;
    height: 797px;
}

.angle {
    font-size: 18px;
    fill: #999;
}

.watermark {
    font-family: "Liberation Serif", serif;
    font-size: 77px;
    fill: #fff;
    stroke: #fff;
    filter: drop-shadow(1.5px 1.5px 0 #666);
}

.han {
    font-family: "Noto Sans CJK SC", sans-serif;
    font-weight: 300;
}

.cube-shadow {
    fill: #777;
    filter: blur(4px);
}

.front {
    font: bold 16px "Liberation Sans", sans-serif;
    fill: #1e3550;
}

.axis {
    font: bold 15px "Liberation Sans", sans-serif;
}

.y-axis {
    fill: #3fe43f;
}

.z-axis {
    fill: #1c20e0;
}

.x-axis {
    fill: #ea3045;
}

.browser {
    position: relative;
    padding: 4px 0 0 5px;
}

.panel-bar {
    width: 375px;
    height: 31px;
    display: flex;
    align-items: center;
    padding: 0 2px 0 5px;
    background: #f1f1f1;
    border: 1px solid #c6c6c6;
    border-width: 1px 1px 2px;
    color: #777;
}

.rewind {
    width: 13px;
    height: 8px;
    margin-right: 12px;
}

.bullet {
    width: 12px;
    height: 12px;
    margin-left: auto;
}

.grip {
    width: 4px;
    height: 15px;
    margin-left: 8px;
    border: 1px solid #999;
    border-width: 0 1px;
}

.root {
    height: 26px;
    margin: 6px 0 2px 21px;
    display: flex;
    align-items: center;
    gap: 10px;
}

.opened {
    width: 14px;
    height: 14px;
}

.root-row {
    width: 290px;
    height: 25px;
    display: flex;
    align-items: center;
    padding-left: 4px;
    background: #f3f3f3;
}

.ic {
    width: 20px;
    height: 20px;
}

.root-name {
    width: 228px;
    height: 20px;
    display: flex;
    align-items: center;
    gap: 19px;
    margin: 0 5px 0 7px;
    padding-left: 3px;
    background: #929292;
    color: #fff;
    font-size: 14px;
    letter-spacing: 0.15px;
    white-space: nowrap;
}

.radio {
    width: 17px;
    height: 17px;
}

.node {
    height: 30px;
    display: flex;
    align-items: center;
    gap: 10px;
    padding-left: 45px;
}

.arrow {
    width: 12px;
    height: 18px;
}

.node-row {
    height: 25px;
    display: flex;
    align-items: center;
    gap: 11px;
    padding: 0 13px 0 4px;
    background: #f3f3f3;
    font-size: 13.5px;
}

.node-row span {
    padding-left: 6px;
}

.node-row .part {
    padding-left: 7px;
    letter-spacing: -0.3px;
}

.canvas-foot {
    position: relative;
    display: flex;
    align-items: flex-end;
    padding: 0 0 6px 5px;
}

.comments {
    padding-left: 30px;
    letter-spacing: -0.5px;
}

.navbar {
    width: 296px;
    height: 30px;
    margin-left: 431px;
    background: #f0f0f0;
}

.timeline {
    height: 62px;
    flex: none;
    background: #f1f1f1;
    border-top: 2px solid #cfcfcf;
}

.scroll {
    width: 792px;
    height: 8px;
    margin-left: 6px;
    background: #c9c9c9;
    border-radius: 0 0 4px 4px;
}

.track {
    display: flex;
    padding-top: 11px;
}

.playback {
    width: 166px;
    height: 24px;
    margin: 5px 11.5px 0 0;
}

.features {
    display: flex;
    background: linear-gradient(#bbb, #bbb) 15px 30px / 1657px 2px no-repeat;
}

.feature {
    width: 30px;
    height: 32px;
    display: flex;
    flex-direction: column;
    align-items: center;
    justify-content: space-between;
}

.feature svg {
    width: 20px;
    height: 20px;
}

.feature i {
    width: 2px;
    height: 7px;
    background: #bbb;
}

.more {
    width: 10px;
    height: 32px;
    border-bottom: 2px dotted #bbb;
}

.cog {
    width: 21px;
    height: 21px;
    margin: 6px 12px 0 auto;
}

.taskbar {
    height: 46px;
    flex: none;
    display: flex;
    align-items: center;
    background: #d3d3d3;
    border-right: 1px solid #aaa;
    color: #222;
    font-family: "Open Sans", "Noto Sans", sans-serif;
}

.start {
    width: 61px;
    padding: 4px 0 0 20px;
}

.start svg {
    width: 20px;
    height: 20px;
}

.search {
    width: 428px;
    height: 46px;
    display: flex;
    align-items: center;
    gap: 15px;
    padding: 3px 0 0 14px;
    border-top: 1px solid #c5c5c5;
    background: #fff;
    font-size: 18px;
    letter-spacing: -0.1px;
}

.search svg {
    width: 20px;
    height: 20px;
}

.task {
    width: 62.1px;
    height: 46px;
    display: grid;
    place-items: center;
    padding-top: 3px;
}

.task svg {
    width: 29px;
    height: 29px;
}

.task.open {
    background: #ececec;
}

.word {
    font: bold 12px "Liberation Sans", sans-serif;
    fill: #fff;
}

.battery {
    width: 61px;
    height: 24px;
    margin-left: 156px;
    padding-left: 11px;
    background: linear-gradient(90deg, #16923f 51px, #000 51px) padding-box;
    border: 2px solid #fff;
    color: #fff;
    font-size: 17px;
    letter-spacing: -0.4px;
    line-height: 21px;
}

.plug {
    width: 14px;
    height: 24px;
    margin-left: 8px;
}

.weather-icon {
    width: 26px;
    height: 22px;
    margin-left: 81px;
}

.weather {
    width: 142px;
    padding: 5px 0 0 13px;
    font-size: 17.5px;
    letter-spacing: -0.1px;
    white-space: nowrap;
}

.tray {
    width: 120px;
    height: 24px;
    margin-left: 11px;
}

.lang {
    margin-left: 4px;
    padding-top: 4px;
    font-size: 14.5px;
    letter-spacing: -0.4px;
}

.clock {
    width: 72px;
    display: flex;
    flex-direction: column;
    align-items: center;
    margin: 3px 0 0 14px;
    font-size: 14px;
    line-height: 23px;
    letter-spacing: -0.3px;
}

.notify {
    width: 36px;
    height: 34px;
    margin: 6px 11px 0 auto;
    font-size: 16px;
}
</style>
